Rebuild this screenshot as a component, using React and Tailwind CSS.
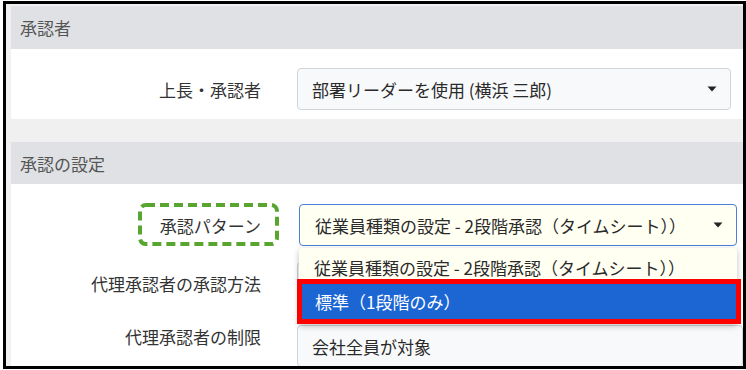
import React from 'react';

const font = { fontFamily: '"Noto Sans CJK JP", "Noto Sans", sans-serif' };

const Caret = () => (
  <svg width="10" height="6" viewBox="0 0 10 6" className="shrink-0">
    <path d="M0.5 0.5 L9.5 0.5 L5 5.5 Z" fill="#222" />
  </svg>
);

const Label = ({ children }) => (
  <div className="flex h-[42px] w-[250px] shrink-0 items-center justify-end text-[17px] leading-none text-[#333]">
    {children}
  </div>
);

const SectionHeader = ({ children, className = '' }) => (
  <div className={`flex items-center bg-[#dfe1e4] pl-[9px] text-[17px] leading-none text-[#555] ${className}`}>
    {children}
  </div>
);

export default function App() {
  return (
    <div className="h-[370px] w-[746px] overflow-hidden bg-white pl-[3px] pt-[1px] antialiased" style={font}>
      <div className="h-[368px] w-[743px] overflow-hidden border-[3px] border-black bg-[#f0f0f0] pl-[5px] pt-[2px]">
        {/* 承認者 */}
        <section className="bg-white">
          <SectionHeader className="h-[43px]">承認者</SectionHeader>
          <div className="flex h-[70px] pt-[19px]">
            <Label>上長・承認者</Label>
            <div className="ml-[36px] flex h-[42px] w-[434px] items-center justify-between rounded-[4px] border border-[#ced4da] bg-[#f8f9fa] pl-[14px] pr-[13px] text-[17px] leading-none text-[#2a2a2a]">
              <span>部署リーダーを使用 (横浜 三郎)</span>
              <Caret />
            </div>
          </div>
        </section>

        {/* 承認の設定 */}
        <section className="mt-[23px] h-[230px] bg-white">
          <SectionHeader className="h-[42px]">承認の設定</SectionHeader>
          <div className="pt-[20px]">
            <div className="relative flex h-[42px]">
              <Label>
                <span className="relative">
                  承認パターン
                  <svg
                    className="absolute left-[-22px] top-[-14px]"
                    width="141"
                    height="43"
                    viewBox="0 0 141 43"
                  >
                    <rect
                      x="2"
                      y="2"
                      width="137"
                      height="39"
                      rx="6"
                      fill="none"
                      stroke="#58a52f"
                      strokeWidth="4"
                      strokeDasharray="9 5"
                    />
                  </svg>
                </span>
              </Label>
              <div className="relative ml-[38px] w-[438px]">
                <div className="flex h-[42px] items-center justify-between rounded-[4px] border border-[#4a80d9] bg-[#fffff2] pl-[15px] pr-[13px] text-[17px] leading-none text-[#2a2a2a]">
                  <span>従業員種類の設定 - 2段階承認（タイムシート））</span>
                  <Caret />
                </div>
                {/* open dropdown list */}
                <div className="absolute left-0 top-[44px] z-10 w-[438px] rounded-t-[4px] bg-[#fffff2] shadow-[0_2px_6px_rgba(0,0,0,0.25)]">
                  <div className="flex h-[31px] items-end pb-[3px] pl-[15px] text-[17px] leading-none text-[#2a2a2a]">
                    従業員種類の設定 - 2段階承認（タイムシート））
                  </div>
                  <div className="ml-[-2px] mr-[-4px] border-[5px] border-[#ff0000] bg-[#1c66d4]">
                    <div className="flex h-[35px] items-center pl-[13px] text-[17px] leading-none text-white">
                      標準（1段階のみ）
                    </div>
                  </div>
                </div>
              </div>
            </div>

            <div className="mt-[16px] flex h-[42px]">
              <Label>代理承認者の承認方法</Label>
              <div className="ml-[36px] h-[42px] w-[434px] rounded-[4px] border border-[#ced4da] bg-[#f8f9fa]" />
            </div>

            <div className="mt-[21px] flex h-[42px]">
              <div className="mt-[-10px]">
                <Label>代理承認者の制限</Label>
              </div>
              <div className="ml-[36px] flex h-[42px] w-[450px] items-center rounded-[4px] border border-[#ced4da] bg-[#f8f9fa] pl-[14px] text-[17px] leading-none text-[#2a2a2a]">
                会社全員が対象
              </div>
            </div>
          </div>
        </section>
      </div>
    </div>
  );
}
